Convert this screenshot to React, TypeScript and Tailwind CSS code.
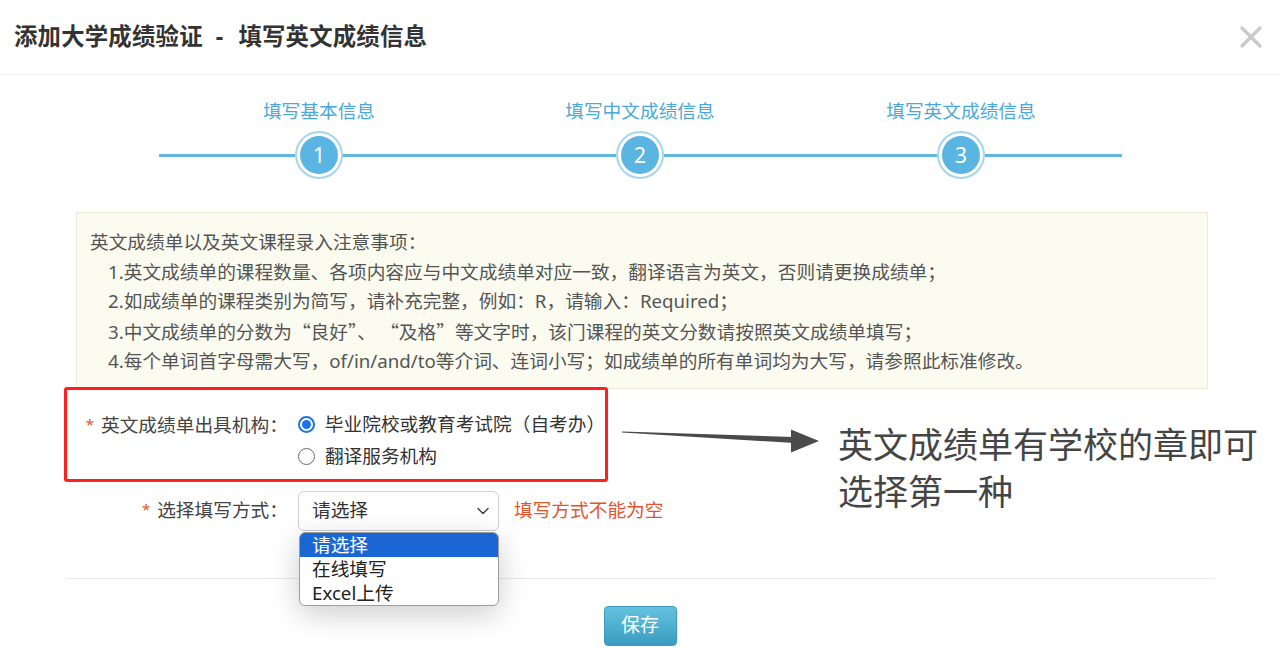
import React from "react";

const FONT = '"Noto Sans", "Noto Sans CJK SC", sans-serif';
const CJK = '"Noto Sans CJK SC", sans-serif';

function StepCircle({ n }: { n: number }) {
  return (
    <div className="w-[48px] h-[48px] rounded-full border-2 border-[#a6d6ee] bg-white p-[3px] shrink-0">
      <div className="w-full h-full rounded-full bg-[#5ab5e2] flex items-center justify-center text-white text-[21px] leading-none">
        {n}
      </div>
    </div>
  );
}

function Step({ n, label }: { n: number; label: string }) {
  return (
    <div className="flex flex-col items-center">
      <div className="h-[24px] leading-[24px] text-[18.7px] text-[#4ba8d8]">{label}</div>
      <div className="mt-[8px] w-full h-[48px] flex items-center">
        <div className="flex-1 h-[3px] bg-[#62b9e0]" />
        <StepCircle n={n} />
        <div className="flex-1 h-[3px] bg-[#62b9e0]" />
      </div>
    </div>
  );
}

function Star() {
  return <span className="text-[#e4532c] text-[15px] mr-[7px] relative top-[-2px]">*</span>;
}

export default function App() {
  return (
    <div
      className="relative w-[1280px] h-[663px] overflow-hidden bg-white text-[#444]"
      style={{ fontFamily: FONT }}
    >
      {/* Header */}
      <div className="h-[75px] border-b border-[#ececec] flex items-center justify-between pl-[14px] pr-[18px]">
        <div className="text-[23.4px] font-bold text-[#333] tracking-[0.2px]">
          添加大学成绩验证<span className="ml-[13px] mr-[15px]">-</span>填写英文成绩信息
        </div>
        <svg width="22" height="22" viewBox="0 0 22 22">
          <path d="M2 2 L20 20 M20 2 L2 20" stroke="#c9c9c9" strokeWidth="3.2" strokeLinecap="round" />
        </svg>
      </div>

      {/* Steps */}
      <div className="mt-[24px] mx-auto w-[963px] grid grid-cols-3">
        <Step n={1} label="填写基本信息" />
        <Step n={2} label="填写中文成绩信息" />
        <Step n={3} label="填写英文成绩信息" />
      </div>

      {/* Notice */}
      <div className="mt-[33px] ml-[76px] w-[1132px] bg-[#fbfbef] border border-[#ebead6] pt-[14px] pb-[12px] pl-[13px] text-[18.7px] leading-[29.5px] text-[#555]">
        <div>英文成绩单以及英文课程录入注意事项：</div>
        <div className="pl-[18px]">
          <div>1.英文成绩单的课程数量、各项内容应与中文成绩单对应一致，翻译语言为英文，否则请更换成绩单；</div>
          <div>2.如成绩单的课程类别为简写，请补充完整，例如：R，请输入：Required；</div>
          <div>
            3.中文成绩单的分数为<span style={{ fontFamily: CJK }}>“良好”、 “及格”</span>等文字时，该门课程的英文分数请按照英文成绩单填写；
          </div>
          <div>4.每个单词首字母需大写，of/in/and/to等介词、连词小写；如成绩单的所有单词均为大写，请参照此标准修改。</div>
        </div>
      </div>

      {/* Row 1 in red box */}
      <div className="mt-[-2px] ml-[64px] w-[544px] h-[95px] border-[3px] border-[#ff1f1f] rounded-[3px] pt-[20px] flex text-[18.7px]">
        <div className="w-[221px] h-[30px] leading-[30px] text-right text-[#444]">
          <Star />
          英文成绩单出具机构：
        </div>
        <div className="ml-[10px] flex flex-col gap-[2px]">
          <div className="h-[30px] flex items-center">
            <div className="w-[17px] h-[17px] rounded-full border-2 border-[#1a73e8] flex items-center justify-center">
              <div className="w-[9px] h-[9px] rounded-full bg-[#1a73e8]" />
            </div>
            <span className="ml-[10px] text-[#333]">毕业院校或教育考试院（自考办）</span>
          </div>
          <div className="h-[30px] flex items-center">
            <div className="w-[17px] h-[17px] rounded-full border-[1.5px] border-[#666]" />
            <span className="ml-[10px] text-[#333]">翻译服务机构</span>
          </div>
        </div>
      </div>

      {/* Row 2 */}
      <div className="mt-[9px] ml-[64px] flex items-center h-[40px] text-[18.7px]">
        <div className="w-[224px] text-right text-[#444]">
          <Star />
          选择填写方式：
        </div>
        <div className="ml-[10px] relative w-[201px] h-[40px] rounded-[6px] border border-[#d0d0d0] flex items-center justify-between pl-[13px] pr-[8px] text-[#333]">
          <span>请选择</span>
          <svg width="14" height="14" viewBox="0 0 14 14">
            <path d="M2 4.5 L7 9.5 L12 4.5" stroke="#444" strokeWidth="1.5" fill="none" strokeLinecap="round" strokeLinejoin="round" />
          </svg>
          <div className="absolute z-10 top-[40px] left-[0px] w-[200px] bg-white border border-[#9c9c9c] rounded-[6px] overflow-hidden shadow-[0_8px_30px_rgba(0,0,0,0.2)] text-[18.7px] leading-[24px] text-[#222]">
            <div className="bg-[#1a66d2] text-white pl-[12px]">请选择</div>
            <div className="pl-[12px]">在线填写</div>
            <div className="pl-[12px]">Excel上传</div>
          </div>
        </div>
        <div className="ml-[15px] text-[#e4552b]">填写方式不能为空</div>
      </div>

      {/* Divider */}
      <div className="mt-[47px] ml-[66px] w-[1149px] h-px bg-[#e9e9e9]" />

      {/* Save */}
      <div className="mt-[27px] flex justify-center">
        <button className="w-[73px] h-[40px] rounded-[4px] border border-[#3b9cc0] bg-gradient-to-b from-[#63c3de] to-[#3a9cc2] text-white text-[19px]">
          保存
        </button>
      </div>

      {/* Annotation arrow */}
      <svg className="absolute left-[620px] top-[425px]" width="200" height="32" viewBox="0 0 200 32">
        <polygon points="2,6.5 174,12 174,18 2,7.6" fill="#4a4a4a" />
        <polygon points="171,4.5 199,16 171,27.5" fill="#4a4a4a" />
      </svg>
      <div className="absolute left-[838px] top-[421px] text-[35px] leading-[47px] text-[#454545] whitespace-nowrap">
        英文成绩单有学校的章即可
        <br />
        选择第一种
      </div>
    </div>
  );
}
